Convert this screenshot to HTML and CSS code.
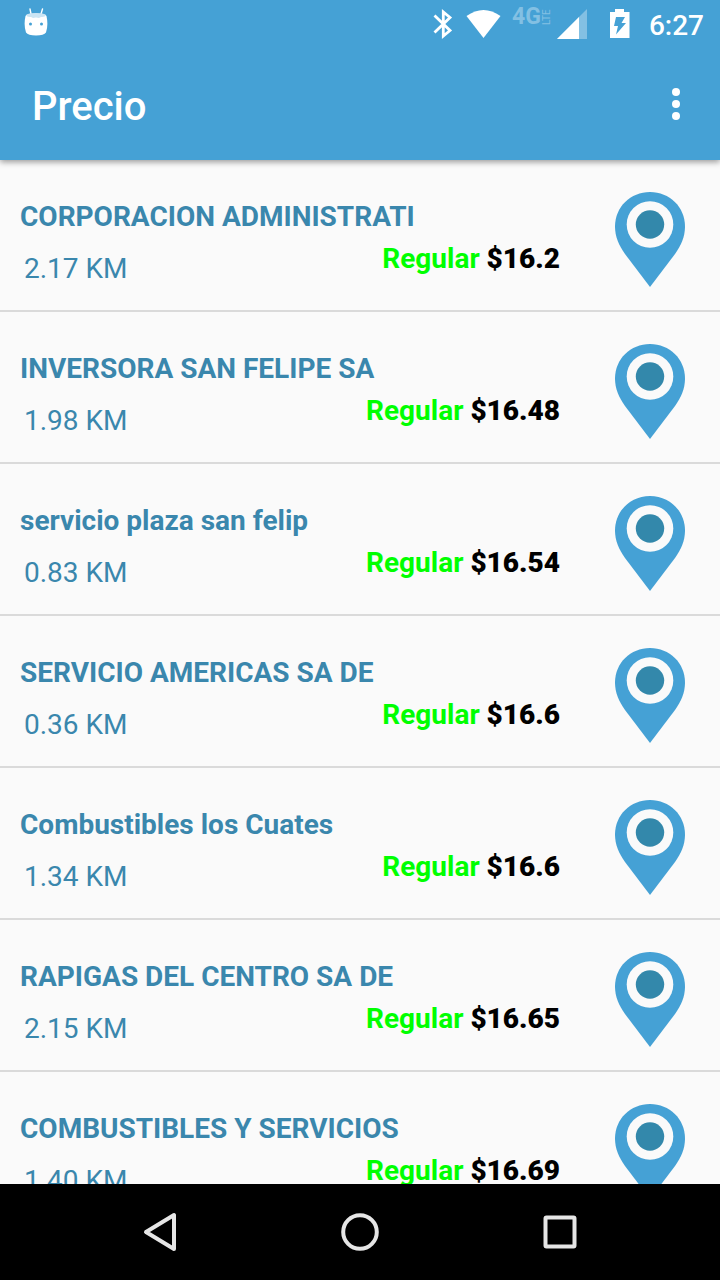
FILE: index.html
```html
<!DOCTYPE html>
<html lang="es">
<head>
<meta charset="utf-8">
<meta name="viewport" content="width=device-width, initial-scale=1">
<title>Precio</title>
<link rel="stylesheet" href="styles.css">
</head>
<body>
<svg class="defs" aria-hidden="true">
  <symbol id="pin" viewBox="0 0 70 95">
    <path class="pin-body" d="M35 0C54.500 0 70 15 70 34.500C70 45 66 53.500 60 62L35 95L10 62C4 53.500 0 45 0 34.500C0 15 15.500 0 35 0Z"/>
    <circle class="pin-ring" cx="35" cy="32.500" r="23.300"/>
    <circle class="pin-dot" cx="35" cy="32.500" r="14.200"/>
  </symbol>
</svg>
<header class="top">
  <div class="status">
    <svg class="droid" width="24" height="28" viewBox="0 0 24 28">
      <path d="M6 1L7 6M18.500 1L17 6" stroke="#fff" stroke-width="1.400" stroke-linecap="round"/>
      <path d="M1.500 8Q2 5.500 12 5.500T22.500 8Q24.500 17 22 24.500Q20 27.500 12 27.500T2 24.500Q-.5 17 1.500 8Z" fill="#fff"/>
      <path d="M2 7Q4 5 12 5T22 7Q21 9.500 17 9L15 10L12 9.500L9 10L7 9Q3 9.500 2 7Z" fill="#cbe5f4"/>
      <circle cx="6.500" cy="16" r="1.500" fill="#45a1d5"/><circle cx="17.500" cy="16" r="1.500" fill="#45a1d5"/>
    </svg>
    <svg class="status-icons" width="200" height="48" viewBox="429 0 200 48">
      <path d="M434.500 15.500L450 30.500L443.300 36V12L450 17.500L434.500 32.500" fill="none" stroke="#fff" stroke-width="2.800"/>
      <path d="M466.500 16Q483.500 4 500.500 16L483.500 38Z" fill="#fff"/>
      <text class="network" x="512" y="24">4G</text>
      <text class="lte" transform="translate(550 25) rotate(-90)">LTE</text>
      <path d="M557 39L587 9V39Z" fill="#83c0e3"/>
      <path d="M557 39L579 17V39Z" fill="#fff"/>
      <path d="M615 9H624V12H629.500V38H610V12H615Z" fill="#fff"/>
      <path d="M616 17H625L621.500 23H626L616 34.500L618 26H614Z" fill="#45a1d5"/>
    </svg>
    <time class="clock">6:27</time>
  </div>
  <div class="bar">
    <h1 class="title">Precio</h1>
    <button class="more" aria-label="Más opciones">
      <svg width="8" height="32" viewBox="0 0 8 32" fill="#fff"><circle cx="4" cy="4" r="4"/><circle cx="4" cy="16" r="4"/><circle cx="4" cy="28" r="4"/></svg>
    </button>
  </div>
</header>
<main class="list">
  <article class="station"><h2 class="name">CORPORACION ADMINISTRATI</h2><p class="distance">2.17 KM</p><p class="price"><span class="fuel">Regular</span> <b class="amount">$16.2</b></p><svg class="pin"><use href="#pin"/></svg></article>
  <article class="station"><h2 class="name">INVERSORA SAN FELIPE SA</h2><p class="distance">1.98 KM</p><p class="price"><span class="fuel">Regular</span> <b class="amount">$16.48</b></p><svg class="pin"><use href="#pin"/></svg></article>
  <article class="station"><h2 class="name">servicio plaza san felip</h2><p class="distance">0.83 KM</p><p class="price"><span class="fuel">Regular</span> <b class="amount">$16.54</b></p><svg class="pin"><use href="#pin"/></svg></article>
  <article class="station"><h2 class="name">SERVICIO AMERICAS SA DE</h2><p class="distance">0.36 KM</p><p class="price"><span class="fuel">Regular</span> <b class="amount">$16.6</b></p><svg class="pin"><use href="#pin"/></svg></article>
  <article class="station"><h2 class="name">Combustibles los Cuates</h2><p class="distance">1.34 KM</p><p class="price"><span class="fuel">Regular</span> <b class="amount">$16.6</b></p><svg class="pin"><use href="#pin"/></svg></article>
  <article class="station"><h2 class="name">RAPIGAS DEL CENTRO SA DE</h2><p class="distance">2.15 KM</p><p class="price"><span class="fuel">Regular</span> <b class="amount">$16.65</b></p><svg class="pin"><use href="#pin"/></svg></article>
  <article class="station"><h2 class="name">COMBUSTIBLES Y SERVICIOS</h2><p class="distance">1.40 KM</p><p class="price"><span class="fuel">Regular</span> <b class="amount">$16.69</b></p><svg class="pin"><use href="#pin"/></svg></article>
</main>
<nav class="nav">
  <button class="nav-button" aria-label="Atrás"><svg width="40" height="40" viewBox="0 0 40 40"><path d="M34 3V37L6 20Z"/></svg></button>
  <button class="nav-button" aria-label="Inicio"><svg width="40" height="40" viewBox="0 0 40 40"><circle cx="20" cy="20" r="16.800"/></svg></button>
  <button class="nav-button" aria-label="Recientes"><svg width="40" height="40" viewBox="0 0 40 40"><rect x="5.500" y="5.500" width="29" height="29" rx="1"/></svg></button>
</nav>
</body>
</html>
```
FILE: styles.css
```css
* {
  box-sizing: border-box;
}

body {
  margin: 0;
  height: 100vh;
  display: flex;
  flex-direction: column;
  overflow: hidden;
  background: #fafafa;
  font-family: Roboto, sans-serif;
  font-size: 28px;
  line-height: 32px;
}

h1, h2, p {
  margin: 0;
}

button {
  display: flex;
  align-items: center;
  justify-content: center;
  padding: 0;
  border: 0;
  background: none;
}

.defs {
  display: none;
}

.top {
  z-index: 1;
  flex: none;
  background: #45a1d5;
  color: #fff;
  box-shadow: 0 2px 6px rgba(0, 0, 0, 0.4);
}

.status {
  display: flex;
  align-items: center;
  height: 48px;
  padding: 0 16px 0 24px;
}

.droid {
  margin-bottom: 4px;
}

.status-icons {
  margin-left: auto;
  overflow: visible;
}

.network {
  fill: #83c0e3;
  font-size: 23px;
  font-weight: 700;
}

.lte {
  fill: #83c0e3;
  font-size: 10px;
}

.clock {
  padding: 4px 0 0 20px;
  font-weight: 500;
}

.bar {
  display: flex;
  align-items: center;
  justify-content: space-between;
  height: 112px;
  padding: 0 20px 0 32px;
}

.title {
  padding-top: 6px;
  font-size: 40px;
  font-weight: 500;
  line-height: 48px;
}

.more {
  width: 48px;
  height: 96px;
}

.list {
  flex: 1;
  min-height: 0;
  overflow: hidden;
}

.station {
  display: grid;
  grid-template-columns: 1fr auto 160px;
  grid-template-rows: 42px 42px;
  height: 152px;
  padding: 41px 0 0 20px;
  border-bottom: 2px solid #dadada;
}

.name {
  grid-column: 1 / 3;
  grid-row: 1;
  color: #3a87ad;
  font-size: 28px;
  font-weight: 700;
}

.distance {
  grid-column: 1;
  grid-row: 2;
  align-self: end;
  padding-left: 4px;
  color: #3a87ad;
}

.price {
  grid-column: 2;
  grid-row: 2;
  color: #000;
  font-weight: 700;
}

.fuel {
  color: #0f0;
}

.amount {
  font-weight: 900;
}

.pin {
  grid-column: 3;
  grid-row: 1 / 3;
  justify-self: center;
  width: 70px;
  height: 95px;
  margin-top: -9px;
  margin-left: 20px;
}

.pin-body {
  fill: #45a1d5;
}

.pin-ring {
  fill: #fafafa;
}

.pin-dot {
  fill: #3388ab;
}

.nav {
  flex: none;
  display: flex;
  align-items: center;
  justify-content: center;
  height: 96px;
  background: #000;
}

.nav-button {
  width: 200px;
  height: 96px;
}

.nav-button svg {
  fill: none;
  stroke: #e6e6e6;
  stroke-width: 4;
  stroke-linejoin: round;
}
```
